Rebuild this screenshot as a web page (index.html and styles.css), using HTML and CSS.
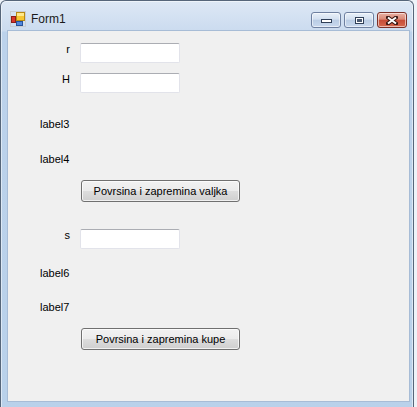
FILE: index.html
```html
<!DOCTYPE html>
<html lang="en">
<head>
    <meta charset="UTF-8">
    <title>Form1</title>
    <link rel="stylesheet" href="styles.css">
</head>
<body>
    <div class="window">
        <div class="titlebar">
            <svg class="app-icon" width="16" height="16" viewBox="0 0 16 16">
                <rect x="0.5" y="0.5" width="15" height="15" fill="none" stroke="#c8ccd2"/>
                <rect x="1.5" y="5.5" width="4" height="6" fill="#d8342a" stroke="#8c1e18"/>
                <rect x="6.5" y="1.5" width="8" height="8" fill="#f7c733" stroke="#b98a12"/>
                <rect x="7" y="2" width="7" height="3" fill="#ffe98a"/>
                <rect x="6.5" y="10.5" width="6" height="4" fill="#4f86dc" stroke="#27529a"/>
            </svg>
            <span class="title">Form1</span>
            <div class="caption-buttons">
                <div class="cap-btn"><span class="glyph-min"></span></div>
                <div class="cap-btn"><span class="glyph-max"></span></div>
                <div class="cap-btn close">
                    <svg width="12" height="9" viewBox="0 0 12 9">
                        <path d="M2 1.5 L10 7.5 M10 1.5 L2 7.5" stroke="#3b1712" stroke-width="4" stroke-linecap="square"/>
                        <path d="M2 1.5 L10 7.5 M10 1.5 L2 7.5" stroke="#ffffff" stroke-width="2"/>
                    </svg>
                </div>
            </div>
        </div>
        <div class="client">
            <div class="field-row first">
                <span class="field-label">r</span>
                <input type="text" class="textbox">
            </div>
            <div class="field-row gap-small">
                <span class="field-label">H</span>
                <input type="text" class="textbox">
            </div>
            <div class="label label3">label3</div>
            <div class="label label4">label4</div>
            <button class="btn btn-first">Povrsina i zapremina valjka</button>
            <div class="field-row s-row">
                <span class="field-label">s</span>
                <input type="text" class="textbox">
            </div>
            <div class="label label6">label6</div>
            <div class="label label7">label7</div>
            <button class="btn btn-second">Povrsina i zapremina kupe</button>
        </div>
    </div>
</body>
</html>
```

FILE: styles.css
```css
body {
    margin: 0;
    background-color: #eef3f9;
    font-family: 'Liberation Sans', Arial, sans-serif;
    overflow: hidden;
}
.window {
    box-sizing: border-box;
    width: 414px;
    height: 420px;
    padding: 0 4px 0 7px;
    border: 1px solid #56667a;
    border-bottom: none;
    border-radius: 6px 6px 0 0;
    background: linear-gradient(#dde8f5 0, #cbdbef 30px, #bcd2eb 31px, #b9d1ea 100%);
    box-shadow: inset 0 0 0 1px rgba(255,255,255,0.5);
}
.titlebar {
    display: flex;
    align-items: flex-start;
    height: 30px;
    box-sizing: border-box;
    padding: 10px 0 0 2px;
}
.app-icon {
    flex: none;
}
.title {
    margin-left: 5px;
    font-size: 12px;
    line-height: 16px;
    color: #1a1a1a;
}
.caption-buttons {
    display: flex;
    gap: 3px;
    margin-left: auto;
    margin-top: 1px;
    margin-right: 2px;
}
.cap-btn {
    box-sizing: border-box;
    width: 30px;
    height: 16px;
    border: 1px solid #6e80a0;
    border-radius: 3px;
    background: linear-gradient(#e9f0f9 0%, #d3e0f0 45%, #b9cce4 50%, #c9d9ee 100%);
    box-shadow: inset 0 0 0 1px rgba(255,255,255,0.55);
    display: flex;
    justify-content: center;
    align-items: flex-end;
}
.glyph-min {
    width: 9px;
    height: 2px;
    margin-bottom: 4px;
    background: #ffffff;
    border: 1px solid #2f3f57;
}
.glyph-max {
    box-sizing: border-box;
    width: 9px;
    height: 7px;
    margin-bottom: 3px;
    border: 1px solid #2f3f57;
    background: #ffffff;
    box-shadow: inset 0 0 0 1px #ffffff, inset 0 0 0 3px #4a5a72;
}
.cap-btn.close {
    border-color: #7c3027;
    background: linear-gradient(#eab1a4 0%, #d98876 45%, #c64b36 50%, #d6694f 100%);
    align-items: center;
}
.client {
    display: flex;
    flex-direction: column;
    align-items: flex-start;
    height: 370px;
    padding-left: 32px;
    background-color: #f0f0f0;
    box-shadow: 0 0 0 1px #a7bcd6;
    font-size: 11px;
    color: #000;
}
.field-row {
    display: flex;
    align-items: flex-start;
    margin-left: -32px;
}
.field-row.first {
    margin-top: 12px;
}
.field-row.gap-small {
    margin-top: 10px;
}
.field-row.s-row {
    margin-top: 27px;
}
.field-label {
    width: 62px;
    text-align: right;
    line-height: 13px;
}
.textbox {
    box-sizing: border-box;
    width: 100px;
    height: 20px;
    margin: 0 0 0 10px;
    padding: 0 3px;
    border: 1px solid #e2e3ea;
    border-top-color: #abadb3;
    border-radius: 2px;
    background: #ffffff;
    font-family: inherit;
    font-size: 11px;
}
.label {
    line-height: 13px;
}
.label3 {
    margin-top: 25px;
}
.label4 {
    margin-top: 22px;
}
.label6 {
    margin-top: 18px;
}
.label7 {
    margin-top: 21px;
}
.btn {
    box-sizing: border-box;
    width: 159px;
    height: 22px;
    margin: 14px 0 0 41px;
    padding: 0;
    border: 1px solid #707070;
    border-radius: 3px;
    background: linear-gradient(#f2f2f2 0%, #ebebeb 50%, #dddddd 51%, #cfcfcf 100%);
    box-shadow: inset 0 0 0 1px rgba(255,255,255,0.7);
    font-family: inherit;
    font-size: 11px;
    color: #000;
}
```
